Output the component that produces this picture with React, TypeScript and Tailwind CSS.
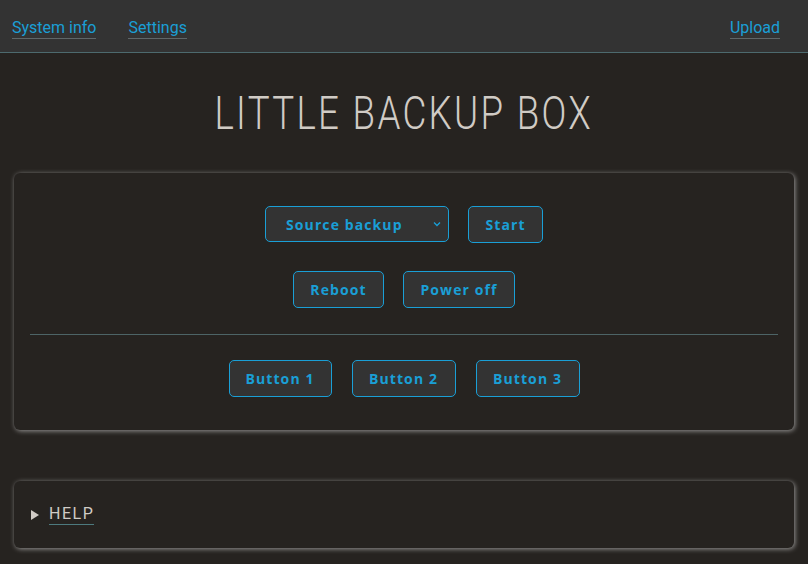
import React from 'react';

const Btn: React.FC<{ label: string; className?: string }> = ({ label, className = '' }) => (
  <button
    className={`h-[37px] whitespace-nowrap rounded-[5px] border border-[#1a9fd6] bg-[#333333] font-['Open_Sans',sans-serif] text-[14px] font-bold tracking-[1.1px] text-[#1a9fd6] ${className}`}
  >
    {label}
  </button>
);

export default function App() {
  return (
    <div className="min-h-[564px] bg-[#262320] font-['Roboto',sans-serif]">
      <nav className="flex h-[53px] items-center border-b border-[#4d6a6e] bg-[#333333] px-3 pt-[4px] text-[16px] text-[#1a9fd6]">
        <a href="#" className="border-b border-[#5f6668] leading-[21px]">System info</a>
        <a href="#" className="ml-8 border-b border-[#5f6668] leading-[21px]">Settings</a>
        <a href="#" className="ml-auto mr-4 border-b border-[#5f6668] leading-[21px]">Upload</a>
      </nav>

      <div className="mt-[36px] flex justify-center">
        <h1 className="inline-block scale-x-[0.78] whitespace-nowrap text-[47px] font-light leading-[48px] tracking-[3px] text-[#d0cbc5]">
          LITTLE BACKUP BOX
        </h1>
      </div>

      <section className="mx-[14px] mt-[36px] rounded-[6px] bg-[#262320] px-4 pb-[33px] pt-[33px] shadow-[1px_1px_5px_rgba(200,200,200,0.7)]">
        <div className="flex justify-center gap-[19px]">
          <div className="flex h-[36px] w-[184px] items-center rounded-[5px] border border-[#1a9fd6] bg-[#333333] pl-[20px] pr-[6px] font-['Open_Sans',sans-serif] text-[14px] font-bold tracking-[1.1px] text-[#1a9fd6]">
            <span className="flex-1 whitespace-nowrap">Source backup</span>
            <svg width="10" height="10" viewBox="0 0 10 10" fill="none" stroke="#1a9fd6" strokeWidth="1.3" className="shrink-0">
              <path d="M2 3.5 L5 6.5 L8 3.5" />
            </svg>
          </div>
          <Btn label="Start" className="h-[36px] w-[75px]" />
        </div>
        <div className="mt-[28px] flex justify-center gap-[19px]">
          <Btn label="Reboot" className="w-[91px]" />
          <Btn label="Power off" className="w-[112px]" />
        </div>
        <hr className="mt-[26px] border-t border-[#4d6466]" />
        <div className="mt-[25px] flex justify-center gap-[20px]">
          <Btn label="Button 1" className="w-[103px]" />
          <Btn label="Button 2" className="w-[104px]" />
          <Btn label="Button 3" className="w-[104px]" />
        </div>
      </section>

      <section className="mx-[14px] mt-[51px] flex h-[67px] items-center rounded-[6px] bg-[#262320] px-[17px] shadow-[1px_1px_5px_rgba(200,200,200,0.7)]">
        <svg width="8" height="10" viewBox="0 0 8 10" className="mr-[10px] shrink-0">
          <path d="M0 0 L8 5 L0 10 Z" fill="#d0cbc5" />
        </svg>
        <span className="border-b border-[#4d7a7e] text-[16px] leading-[20px] tracking-[1.5px] text-[#d0cbc5]">HELP</span>
      </section>
    </div>
  );
}
